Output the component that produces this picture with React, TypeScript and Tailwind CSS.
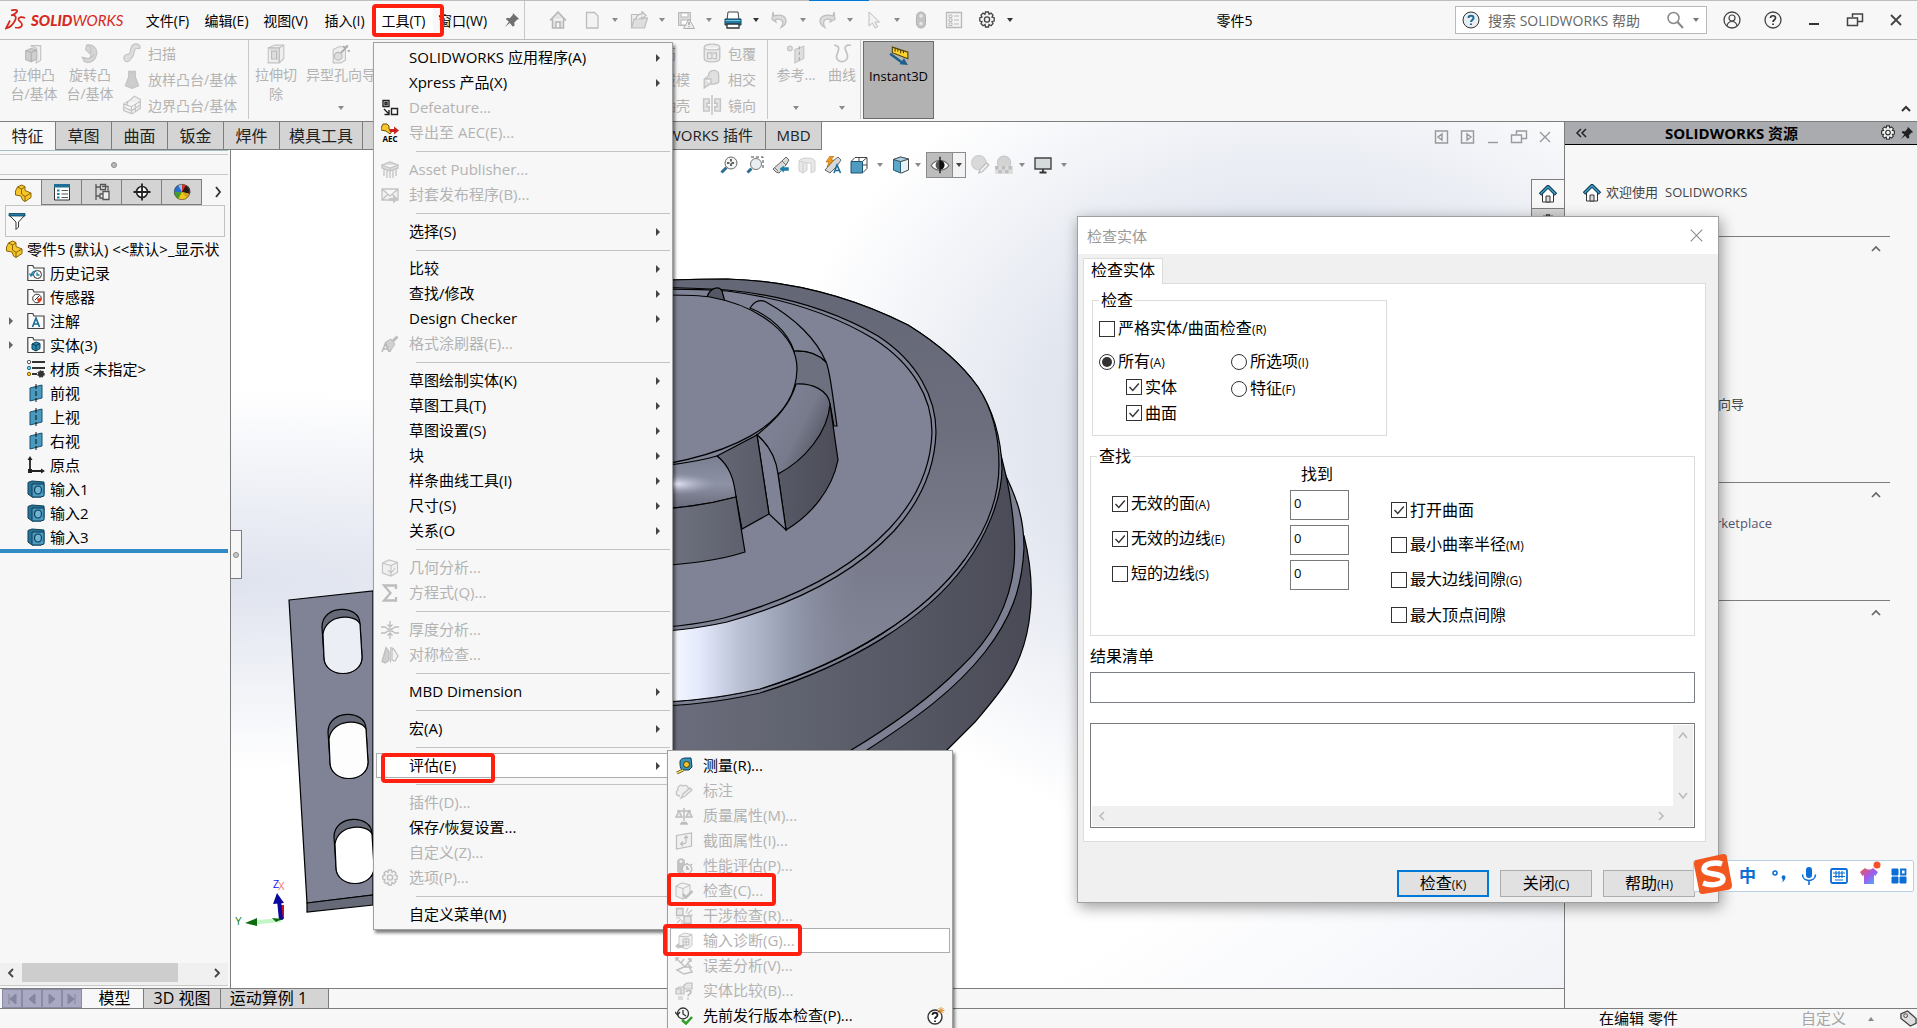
import React from "react";

type P = { children?: React.ReactNode; s?: number; c?: string };
const Ic = ({ children, s = 18, c = "" }: P) => (
  <svg width={s} height={s} viewBox="0 0 18 18" fill="none" className={"shrink-0 " + c} aria-hidden="true">
    {children}
  </svg>
);
const G = "#c3c3c3";
const F = "#e4e4e4";

const Down = ({ c = "text-[#8a8a8a]" }: { c?: string }) => (
  <svg width="8" height="5" viewBox="0 0 8 5" className={"shrink-0 " + c} aria-hidden="true">
    <path d="M1 0h6L4 4z" fill="currentColor" />
  </svg>
);

const icons = {
  home: <path d="M1 9.500 9 1l8 8.500M3.500 8v9h11V8M7 17v-6h4v6" stroke="#b5b5b5" strokeWidth="1.500" fill={F} />,
  homeBlue: (
    <>
      <path d="M3.500 8.500 9 3l5.500 5.500V17h-11z" fill="#fff" stroke="#333" />
      <path d="M7 17v-6h4v6z" fill="#ddd" stroke="#333" />
      <path d="M1 9.500 9 1.500l8 8" stroke="#0d3d57" strokeWidth="3.500" />
      <path d="M1.500 9 9 1.700l7.500 7.300" stroke="#3fa0c4" strokeWidth="1.500" />
    </>
  ),
  doc: <path d="M3.500 1.500h8l3.500 3.500v12H3.500z" fill="#f3f3f3" stroke="#bdbdbd" strokeWidth="1.300" />,
  open: (
    <>
      <path d="M1.500 3.500h6l1.500 2h5v11H1.500z" fill="#eee" stroke="#bdbdbd" strokeWidth="1.200" />
      <path d="m4 8 13.500-1-3 10H1.500z" fill="#dedede" stroke="#bdbdbd" strokeWidth="1.200" />
      <path d="M6 9c0-5 3-6 6-6V.500l4 4-4 3.500V5.500" stroke="#bdbdbd" strokeWidth="1.300" fill="#eee" />
    </>
  ),
  save: (
    <>
      <path d="M1.500 1.500h12v13h-12z" fill="#ddd" stroke="#b8b8b8" />
      <path d="M4 2h7v4H4zM4 9h7v5H4z" fill="#fff" stroke="#b8b8b8" />
      <path d="m12 8 5.500 9.500h-11z" fill="#eee" stroke="#b0b0b0" />
      <path d="M12 11v3m0 1.200v1" stroke="#999" strokeWidth="1.300" />
    </>
  ),
  print: (
    <>
      <path d="M4 1h10l1 8H3z" fill="#fff" stroke="#444" />
      <path d="M1 8h16v6H1z" fill="#1e7ea6" stroke="#0c3e56" />
      <path d="M1.500 9.500h15" stroke="#7ec4df" />
      <path d="M3 13h12v4H3z" fill="#fff" stroke="#333" strokeWidth="1.300" />
    </>
  ),
  undo: (
    <>
      <path d="M3 5c7-2 12 0 12 5 0 3-2 5-5 6.500 2-3 3-7-1-8-2-.6-4 0-5 .5l1 2-4-2.500L2 1z" fill="#dcdcdc" stroke="#bdbdbd" strokeWidth="1.200" />
    </>
  ),
  redo: (
    <>
      <path d="M15 5C8 3 2 5 2 10c0 3 2 5 5 6.500-2-3-2-7 1-8 2-.6 4 0 5 .5l-1 2 5-2.500L16 1z" fill="#dcdcdc" stroke="#bdbdbd" strokeWidth="1.200" />
    </>
  ),
  cursor: <path d="M4 1v14l3.500-3 2.500 5 2.500-1.200L10 11h4.500z" fill="#f3f3f3" stroke="#bdbdbd" />,
  light: (
    <>
      <rect x="4.500" y="1" width="9" height="16" rx="4.500" fill="#c4c4c4" stroke="#b0b0b0" />
      <circle cx="9" cy="5" r="1.700" fill="#e8e8e8" />
      <circle cx="9" cy="12.500" r="1.700" fill="#e8e8e8" />
    </>
  ),
  list: (
    <>
      <path d="M1.500 1.500h15v15h-15z" fill="#f4f4f4" stroke="#b9b9b9" strokeWidth="1.300" />
      <path d="M4 4h3v2.500H4zM4 8h3v2.500H4zM4 12h3v2.500H4zM9 5h5M9 9h5M9 13h5" stroke="#b9b9b9" />
    </>
  ),
  gear: (
    <>
      <path
        d="M7.500 1h3l.5 2.200 2-1.100 2 2-1 2 2.200.6v3.400l-2.200.5 1 2-2 2.100-2-1.100-.5 2.400h-3L7 13.600l-2 1.100-2-2.100 1-2-2.200-.5V6.700L4 6.100l-1-2 2-2 2 1.100z"
        stroke="currentColor"
        strokeWidth="1.300"
        fill="#f2f2f2"
      />
      <circle cx="9" cy="8.500" r="2.600" stroke="currentColor" strokeWidth="1.300" />
    </>
  ),
  pin: <path d="m10 1 7 7-2 .5-3.500 3.500.5 3-2 1.500-3.500-4L1 17l4.500-6L2 8l1.500-1.500 3 .5L10 3z" fill="currentColor" />,
  boss: (
    <>
      <path d="M6 1.500h9v13l-4 2.500V4z" fill="#eee" stroke={G} />
      <path d="m1.500 6 5-2 5 1.500v8l-5 2.500-5-2z" fill="#cfcfcf" stroke="#b8b8b8" />
      <path d="m1.500 6 5 1.500 5-2M6.500 7.500V16" stroke="#b0b0b0" />
    </>
  ),
  revolve: (
    <>
      <path d="M6 1c6-1 10 3 9 8-1 6-6 9-11 7l-2-4 5 1c3 0 4-4 1-5L5 5z" fill="#d5d5d5" stroke={G} />
      <path d="M6 1c4 1 5 4 3 7M2 12c4 2 9 1 11-3" stroke={G} />
    </>
  ),
  sweep: <path d="M2 15c-1-3 1-5 4-5 3-1 0-7 5-9 4-1 6 2 5 4h-3c-3 0-1 6-5 9-1 3-5 4-6 1z" fill="#dedede" stroke={G} />,
  loft: <path d="M6 2h6v5l3 8-6 2.500L3 15l3-8zM6 2l3 1.500L12 2" fill="#cdcdcd" stroke={G} />,
  boundary: <path d="M1.500 8 8 4l3-3 5.500 3v8L9 17l-7.500-3zM1.500 8l7 2.500 8-5M8.500 10.500V17M5 9V5.500M12 8v7M1.500 11l7 3 8-5" fill="#efefef" stroke={G} />,
  cut: (
    <>
      <path d="M2 3.500 8 1h8v12l-4 4H2z" fill="#eee" stroke={G} />
      <path d="M2 3.500h10V17M12 3.500 16 1M5 6.500h4.500v7H5z" fill="#ddd" stroke="#bbb" />
    </>
  ),
  hole: (
    <>
      <path d="M2 5 7 2.500h6v12L9 17H2z" fill="#eee" stroke={G} />
      <circle cx="6.500" cy="11" r="3.500" fill="#ddd" stroke="#b8b8b8" />
      <path d="m9 8 6-6M11 2l1.500 1.500M15 6l2 .5M14 1l1 2" stroke="#aaa" strokeWidth="1.600" />
    </>
  ),
  wrap: <path d="M2 4c0-4 14-4 14 0v10c0 4-14 4-14 0zM2 4c0 3 14 3 14 0M5 9h4v5H5zM10 9h3v5h-3" fill="#eaeaea" stroke={G} strokeWidth="1.200" />,
  intersect: <path d="M6 5c0-5 9-5 9 0v7c-2 2-6 2-7 1l-6 4V9l4-3zM8 13V9L2 9" fill="#e0e0e0" stroke={G} strokeWidth="1.200" />,
  mirror: <path d="M9 0v18M1.500 3.500v11h5v-4h-2v-3h2v-4zM16.500 3.500v11h-5v-4h2v-3h-2v-4z" fill="#e6e6e6" stroke={G} strokeWidth="1.300" />,
  refgeo: (
    <>
      <circle cx="3.500" cy="4" r="2.200" fill="#ddd" stroke={G} />
      <path d="m8 5 8-3v11l-8 4z" fill="#dedede" stroke={G} />
      <path d="M12 2v15" stroke="#aaa" strokeDasharray="3 2" />
    </>
  ),
  curve: <path d="M2 1c7 1 3 6 2 10 0 7 10 6 10 0 0-4-5-8 0-10h3" stroke={G} strokeWidth="1.600" />,
  instant: (
    <>
      <path d="m3 1 14 4.500v6L3 6z" fill="#ffd42e" stroke="#4f4000" />
      <path d="M5.500 2v3M8 2.700v2.200M10.500 3.500v3M13 4.300v2.200" stroke="#4f4000" />
      <path d="m1 7 11 8" stroke="#1f5f8c" strokeWidth="2.200" />
      <path d="m9.500 16.500 7.500.5-3.500-6z" fill="#1f5f8c" />
    </>
  ),
  part: (
    <>
      <path d="m1.500 7 2-4 4-2 3.500 1.500v4L17 9v4.500l-6 4L8.500 16 7 12 1.500 11z" fill="#f6c62a" stroke="#8a6508" />
      <path d="m3.500 3 4 2L11 3M7.500 5v5l3.500 2.500L17 9M11 12.500v5" stroke="#8a6508" />
    </>
  ),
  props: (
    <>
      <path d="M1.500 2h15v15h-15z" fill="#fff" stroke="#333" />
      <path d="M1 1h16v3.500H1z" fill="#1d6f95" />
      <path d="M4 7.500h2.500M4 11h2.500M4 14.500h2.500" stroke="#1d7fa8" strokeWidth="2" />
      <path d="M8.500 7.500H15M8.500 11H15M8.500 14.500H15" stroke="#555" />
    </>
  ),
  config: <path d="M3 1v16M3 4h4M3 13h4M7.500 1.500h5v5h-5zM10 8.500h6v8h-6zM7 11h3v4H7zM9 3.500h6v4" stroke="#555" strokeWidth="1.300" fill="#eee" />,
  target: (
    <>
      <circle cx="9" cy="9" r="5.500" stroke="#222" strokeWidth="1.600" fill="#fff" />
      <path d="M9 .5v17M.5 9h17" stroke="#222" strokeWidth="1.800" />
    </>
  ),
  ball: (
    <>
      <circle cx="9" cy="9" r="8" fill="#f0c419" />
      <path d="M9 9C8 6 7 3 5 2a8 8 0 0 0-4 7c0 1 0 2 1 3z" fill="#2a6fd0" />
      <path d="M9 9 8 1a8 8 0 0 0-3 1z" fill="#8cc3f2" />
      <path d="M9 9 2 12A8 8 0 0 1 1 9z" fill="#45a02b" />
      <path d="M9 9 9 1a8 8 0 0 1 7 5z" fill="#d9362b" />
      <path d="M9 9 13 2a8 8 0 0 1 4 9z" fill="#2b1a1a" />
      <path d="m9 9 5 6.200a8 8 0 0 0 3-4.200z" fill="#d9a520" />
      <path d="M9 9 2 12a8 8 0 0 0 3 4z" fill="#3f9a2b" />
      <circle cx="9" cy="9" r="7.700" stroke="#555" strokeWidth=".7" />
    </>
  ),
  funnel: (
    <>
      <path d="M1 3h16l-6.500 7v5L8 17.500V10z" fill="#fff" stroke="#333" />
      <path d="M1 1.500h16V4H1z" fill="#1e7ea6" stroke="#0c3e56" strokeWidth=".8" />
    </>
  ),
  zoomfit: (
    <>
      <path d="m1.500 16.500 5-5" stroke="#2b6f96" strokeWidth="3" />
      <circle cx="11" cy="7" r="6" fill="#f4f4f4" stroke="#666" />
      <path d="M11 3v8M7 7h8" stroke="#333" strokeDasharray="2.500 2" strokeWidth="1.500" />
    </>
  ),
  zoomarea: (
    <>
      <path d="M5 1h12v12" stroke="#444" strokeDasharray="3 2" />
      <path d="m1.500 16.500 4-4" stroke="#2b6f96" strokeWidth="3" />
      <circle cx="10" cy="8" r="5.500" fill="#e9eef2" stroke="#777" />
    </>
  ),
  prev: (
    <>
      <path d="m1 13 9-8 4-4 3 3-3 5-7 8-3-1z" fill="#d8d8d8" stroke="#666" />
      <path d="m3 12 3 3M10 5l4 4" stroke="#777" />
      <path d="m7 13 5-4v2h5v4h-5v2z" fill="#1d7fa8" stroke="#fff" strokeWidth=".5" />
    </>
  ),
  section: <path d="M1 5c2-4 14-4 16 0v10l-4 2V7H9v7l-4 3-4-2zM1 5l8 2M5 7v10" fill="#e8e8e8" stroke="#cfcfcf" />,
  dyn: (
    <>
      <path d="m1 14 8-9 5-4 3 3-4 6-7 7z" fill="#d8d8d8" stroke="#666" />
      <path d="m6 0-4 6h3l-2 5 7-7H7l3-4z" fill="#f39a1d" stroke="#a85f00" strokeWidth=".6" />
      <path d="m10 17 3-8 3.500 8M11 14.500h4.500" stroke="#1f6f9c" strokeWidth="1.600" />
    </>
  ),
  orient: (
    <>
      <path d="M5 1.500h12v11l-4 4M13 5l4-3.500M5 1.500 1.500 5M9 1v4M13 9h4" stroke="#444" fill="#fff" />
      <path d="M1 5.500h11.500V17H1z" fill="#4f9cc0" stroke="#1c536e" />
    </>
  ),
  style: (
    <>
      <path d="m1.500 3.500 7-2.500 8 2v11l-7 3-8-3z" fill="#e4f1f7" stroke="#444" />
      <path d="m1.500 3.500 7 2V17l-7-3z" fill="#5aa9cb" stroke="#2b5f78" />
      <path d="m8.500 5.500 8-2.500" stroke="#444" />
      <path d="m1.500 3.500 7-2.500 8 2-8 2.500z" fill="#a9d3e6" stroke="#444" strokeWidth=".8" />
    </>
  ),
  eye: (
    <>
      <path d="M1 9.500c4-6 12-6 16 0-4 5.500-12 5.500-16 0z" fill="#fff" stroke="#666" />
      <circle cx="9" cy="9" r="4" fill="#555" />
      <path d="M9 5a4 4 0 0 1 0 8z" fill="#111" />
      <path d="M9 1.500v15" stroke="#111" strokeWidth="1.200" />
    </>
  ),
  appear: (
    <>
      <circle cx="8" cy="7" r="6.500" fill="#d9d9d9" stroke="#ccc" />
      <path d="m8 16 1-3 6-6 2 2-6 6z" fill="#f1f1f1" stroke="#bbb" />
    </>
  ),
  scene: (
    <>
      <circle cx="9" cy="7" r="6" fill="#d4d4d4" stroke="#c8c8c8" />
      <path d="M1 10h16v7H1z" fill="#dcdcdc" />
      <path d="M1 10h3v3H1zM7 10h3v3H7zM13 10h3v3h-3zM4 13.500h3v3H4zM10 13.500h3v3h-3z" fill="#bdbdbd" />
    </>
  ),
  monitor: (
    <>
      <path d="M1 2h16v11H1z" fill="#d5dadb" stroke="#444" strokeWidth="1.400" />
      <path d="M9 13v3M5.500 16.500h7" stroke="#333" strokeWidth="1.800" />
    </>
  ),
  defeature: <path d="M2 1.500h6v6H2zM4 3.500h2v2H4zM10.500 9.500h6v6h-6zM3 10l5 5M8 11v4.500H3.500" stroke="#222" strokeWidth="1.400" />,
  asset: <path d="m1 4 8-3 8 3-8 3zM1 4v3l8 3 8-3V4M3 8v7M6 9v8M12 9v8M15 8v7M9 7v10" fill="#ddd" stroke={G} strokeWidth="1.300" />,
  envelope: (
    <>
      <path d="M1 3h16v11H1zM1 3l8 7 8-7M1 14l6-6M17 14l-6-6" fill="#f0f0f0" stroke={G} strokeWidth="1.300" />
      <path d="M8 12h4v-2.500l5 4-5 4V15H8z" fill="#c5c5c5" />
    </>
  ),
  brush: (
    <>
      <path d="m16.500 1.500-5 5" stroke="#bdbdbd" strokeWidth="3" />
      <path d="m6 6 4-2 4 5-2 3-3 5-5-7z" stroke="#bdbdbd" fill="#d0d0d0" />
      <path d="m1 17 3.500-9L8 17M2 14h5" stroke="#b9b9b9" strokeWidth="1.500" />
    </>
  ),
  geoan: <path d="M1.500 4 8 1l8.500 2.500v10L10 17l-8.500-3zM1.500 4 10 6.500l6.500-3M10 6.500V17M7 11l3 3 4-5" fill="#f0f0f0" stroke="#c5c5c5" strokeWidth="1.200" />,
  sigma: <path d="M15 5V1.500H3L9.500 9 3 16.500h12V13" stroke="#bdbdbd" strokeWidth="2.300" />,
  thick: <path d="M9 0v6M6.500 3.500 9 6l2.500-2.500M9 18v-6M6.500 14.500 9 12l2.500 2.500M0 6h4l3 2h4l3-2h4M0 12h4l3-2h4l3 2h4" stroke="#bdbdbd" strokeWidth="1.300" />,
  symm: (
    <>
      <path d="m1 15.500 4-14 3 4v9l-4 2.500z" fill="#cfcfcf" stroke="#bdbdbd" strokeWidth="1.200" />
      <path d="m11 2 2 1.500 4 6.500-3 5-3-1z" fill="#f3f3f3" stroke="#c0c0c0" strokeWidth="1.300" />
      <path d="M9.500 1v16" stroke="#c8c8c8" />
    </>
  ),
  measure: (
    <>
      <path d="M5 5c0-3 3-4 6-4h5l1 9-3 3H7c-2-2-2-5-2-8z" fill="#3a94bb" stroke="#0d3d57" />
      <circle cx="11.500" cy="7.500" r="3" fill="#f4c430" stroke="#4a3a00" />
      <path d="m8 13-6 3" stroke="#4a3a00" strokeWidth="3" />
      <path d="m8 13-6 3" stroke="#f4d75c" strokeWidth="1.400" />
    </>
  ),
  note: <path d="M5 14c-4 0-5-4-2-6-1-4 3-6 5-4 3-2 6 1 5 3M6 16l2-4 7-6 2 2-7 6z" stroke={G} strokeWidth="1.300" fill="#efefef" />,
  scale: <path d="M9 1v13M2 4h14M4 4 1 10h6zM14 4l-3 6h6zM6 15.500h6M5 17h8" stroke="#bebebe" strokeWidth="1.500" fill="#e8e8e8" />,
  sect: <path d="M1.500 3.500 16.500 1v13l-15 3zM11 5v5c0 2-3 2-5 2M8 9.500 5.500 12 8 14M9 6.500 11 4l2 2" stroke="#bdbdbd" strokeWidth="1.200" fill="#f1f1f1" />,
  perf: (
    <>
      <path d="M2 5c0-5 8-5 8 0v4l-3 7c-3 1-5 0-5-3z" fill="#c2c2c2" />
      <circle cx="6" cy="4.500" r="1.500" fill="#eee" />
      <circle cx="12" cy="12" r="4.800" fill="#f1f1f1" stroke="#bbb" strokeWidth="1.300" />
      <path d="M12 9v3h2M12 6v1M16 7l1 1" stroke="#aaa" strokeWidth="1.300" />
    </>
  ),
  check: (
    <>
      <path d="M1 4 7 1l8 2v9l-7 5-7-3zM1 4l7 2.500L15 3M8 6.500V16" fill="#f2f2f2" stroke="#c8c8c8" strokeWidth="1.200" />
      <path d="m8 12 3 3.500L17.500 9" stroke="#bdbdbd" strokeWidth="2.500" />
    </>
  ),
  interf: (
    <>
      <path d="M1.500 1.500h6.500v7H1.500zM9 9h7v7.500H9z" fill="#e6e6e6" stroke="#bdbdbd" strokeWidth="1.300" />
      <path d="M11 6l2-5M12.500 7 17 3M13 8h5M1 11h4M2 16l4-4M7 17v-4" stroke="#c6c6c6" strokeWidth="1.200" />
    </>
  ),
  importd: (
    <>
      <path d="m4 4 5-3 8 1.500v11L12 17l-8-2z" fill="#f2f2f2" stroke="#c8c8c8" />
      <path d="M8 7h6v6H8zM11 7v6M8 10h6M4 4l8 1 5-2.500" stroke="#bdbdbd" />
      <path d="m0 14 4-3v2h5v2.500H4V17z" fill="#c2c2c2" />
    </>
  ),
  dev: <path d="m1 1 5 5M1 4V1h3M9 2l-3 4 4 4 6-8M13 2h3v3M9 10l-7 3 7 4 8-2-3-5zM13 7l4 4" stroke="#bfbfbf" strokeWidth="1.400" />,
  compare: (
    <>
      <path d="m1 7 3-2h5v7H1zM1 7h5v5M9 3l3-2h5v6H9zM3 15h5M3 17h5" fill="#e5e5e5" stroke="#bfbfbf" strokeWidth="1.200" />
      <path d="M11 10c1-2 5-2 5 0s-3 2-3 4.500M13 16v1.500" stroke="#bbb" strokeWidth="1.600" />
    </>
  ),
  prevcheck: (
    <>
      <circle cx="8" cy="6.500" r="5.500" stroke="#333" strokeWidth="1.300" />
      <path d="M8 3v4l3 2M0 5l2.500 3L5 5" stroke="#333" strokeWidth="1.300" />
      <path d="m7 13 4 3.500L17 10" stroke="#2f9d28" strokeWidth="2.500" />
    </>
  ),
  qnew: (
    <>
      <circle cx="8" cy="10" r="7" stroke="#333" strokeWidth="1.400" fill="#fff" />
      <path d="M5.500 8c0-3 5-3 5 0 0 2-2.500 2-2.500 4M8 13.500V15" stroke="#222" strokeWidth="1.800" />
      <path d="M14 0v7M10.500 3.500h7M11.500 1l5 5M16.500 1l-5 5" stroke="#e0902a" />
    </>
  ),
};
type IN = keyof typeof icons;
const I = ({ n, s, c }: { n: IN; s?: number; c?: string }) => <Ic s={s} c={c}>{icons[n]}</Ic>;

const Folder = ({ children }: { children: React.ReactNode }) => (
  <Ic>
    <path d="M.800 4V1.500h5L7 4h10v12.500H.800z" fill="#fafafa" stroke="#444" strokeWidth="1.200" />
    {children}
  </Ic>
);
const Plane = (
  <Ic>
    <path d="m3 4 12-3v13L3 17z" fill="#4a9abf" stroke="#16506d" />
    <path d="M9 0v18" stroke="#111" strokeDasharray="5 2" />
  </Ic>
);
const Cube = (
  <Ic>
    <path d="M1 2.500 5 1l12 1v12l-3 3H5l-4-3z" fill="#2a7398" stroke="#0d3d57" />
    <path d="M5 4h12v12l-3 1H5z" fill="#4a9bc0" stroke="#0d3d57" />
    <ellipse cx="11" cy="10" rx="3.500" ry="4" fill="#6fb4d1" stroke="#0d3d57" strokeWidth="1.200" />
  </Ic>
);

const tree: { t: string; i: React.ReactNode; x?: boolean }[] = [
  { t: "历史记录", i: <Folder><circle cx="10.500" cy="10.500" r="4" stroke="#333" /><path d="M4 11a6 6 0 0 1 5-4M2.500 9.500 4 12l2.500-2M10 8.500v2.500h2.500" stroke="#1d7fa8" strokeWidth="1.300" /></Folder> },
  { t: "传感器", i: <Folder><circle cx="10" cy="10.500" r="4.300" stroke="#333" fill="#fff" /><path d="M10 10.500 14 10a4 4 0 0 1-3 4.500z" fill="#e03a1c" /><path d="m8 12 4-4" stroke="#333" /></Folder> },
  { t: "注解", x: true, i: <Folder><path d="m5.500 15 3.500-9 3.500 9M7 12h4.500" stroke="#1d6f95" strokeWidth="1.700" /></Folder> },
  { t: "实体(3)", x: true, i: <Folder><path d="m5 8 4-2 4 1.500v5L9 15l-4-2z" fill="#2b88b0" stroke="#0d3d57" /><path d="m5 8 4 1.500L13 7.500M9 9.500V15" stroke="#0d3d57" /></Folder> },
  { t: "材质 <未指定>", i: <Ic><path d="M5 2h13M5 8h13M5 14h5" stroke="#333" strokeWidth="1.800" /><circle cx="2" cy="2" r="1.700" fill="#fff" stroke="#555" /><circle cx="2" cy="8" r="1.700" fill="#7cc7e6" stroke="#1d6f95" /><circle cx="2" cy="14" r="1.700" fill="#f3c623" stroke="#8a6508" /><circle cx="14" cy="14" r="3" fill="#333" stroke="#333" strokeWidth="1.500" strokeDasharray="1.500 1" /></Ic> },
  { t: "前视", i: Plane },
  { t: "上视", i: Plane },
  { t: "右视", i: Plane },
  { t: "原点", i: <Ic><path d="M3 2v13h13" stroke="#222" strokeWidth="1.800" /><path d="m3 0 2.500 4h-5zM18 15l-4-2.500v5zM1 13h4v4H1z" fill="#222" /></Ic> },
  { t: "输入1", i: Cube },
  { t: "输入2", i: Cube },
  { t: "输入3", i: Cube },
];

const Aec = (
  <Ic>
    <path d="m0 5 2-4h4l2 2v3l3 2-2 3-4-3-5-1z" fill="#f6c62a" stroke="#6d5006" />
    <path d="M8 6h5V3.500l5 4-5 4V9H9z" fill="#cc2222" />
  </Ic>
);

type MI = { t?: string; d?: boolean; sub?: boolean; i?: React.ReactNode; hot?: boolean } | null;
const menu: MI[] = [
  { t: "SOLIDWORKS 应用程序(A)", sub: true },
  { t: "Xpress 产品(X)", sub: true },
  { t: "Defeature...", d: true, i: <I n="defeature" /> },
  {
    t: "导出至 AEC(E)...",
    d: true,
    i: (
      <span className="flex flex-col items-center">
        <span className="h-3 overflow-hidden">{Aec}</span>
        <span className="text-[8px] leading-2 font-bold text-black">AEC</span>
      </span>
    ),
  },
  null,
  { t: "Asset Publisher...", d: true, i: <I n="asset" /> },
  { t: "封套发布程序(B)...", d: true, i: <I n="envelope" /> },
  null,
  { t: "选择(S)", sub: true },
  null,
  { t: "比较", sub: true },
  { t: "查找/修改", sub: true },
  { t: "Design Checker", sub: true },
  { t: "格式涂刷器(E)...", d: true, i: <I n="brush" /> },
  null,
  { t: "草图绘制实体(K)", sub: true },
  { t: "草图工具(T)", sub: true },
  { t: "草图设置(S)", sub: true },
  { t: "块", sub: true },
  { t: "样条曲线工具(I)", sub: true },
  { t: "尺寸(S)", sub: true },
  { t: "关系(O", sub: true },
  null,
  { t: "几何分析...", d: true, i: <I n="geoan" /> },
  { t: "方程式(Q)...", d: true, i: <I n="sigma" /> },
  null,
  { t: "厚度分析...", d: true, i: <I n="thick" /> },
  { t: "对称检查...", d: true, i: <I n="symm" /> },
  null,
  { t: "MBD Dimension", sub: true },
  null,
  { t: "宏(A)", sub: true },
  null,
  { t: "评估(E)", sub: true, hot: true },
  null,
  { t: "插件(D)...", d: true },
  { t: "保存/恢复设置..." },
  { t: "自定义(Z)...", d: true },
  { t: "选项(P)...", d: true, i: <I n="gear" c="text-[#bdbdbd]" /> },
  null,
  { t: "自定义菜单(M)" },
];
const evalMenu: MI[] = [
  { t: "测量(R)...", i: <I n="measure" /> },
  { t: "标注", d: true, i: <I n="note" /> },
  { t: "质量属性(M)...", d: true, i: <I n="scale" /> },
  { t: "截面属性(I)...", d: true, i: <I n="sect" /> },
  { t: "性能评估(P)...", d: true, i: <I n="perf" /> },
  { t: "检查(C)...", d: true, i: <I n="check" /> },
  { t: "干涉检查(R)...", d: true, i: <I n="interf" /> },
  { t: "输入诊断(G)...", d: true, i: <I n="importd" />, hot: true },
  { t: "误差分析(V)...", d: true, i: <I n="dev" /> },
  { t: "实体比较(B)...", d: true, i: <I n="compare" /> },
  { t: "先前发行版本检查(P)...", i: <I n="prevcheck" /> },
];

const Menu = ({ items, help }: { items: MI[]; help?: boolean }) => (
  <ul className="flex flex-col px-[2px] py-[2px] text-[15px]">
    {items.map((m, k) =>
      m === null ? (
        <li key={k} className="flex h-3 items-center pl-10" role="separator">
          <span className="h-px w-full bg-[#c3c3c3]" />
        </li>
      ) : (
        <li key={k}>
          <button
            disabled={m.d}
            className={
              "flex h-[25px] w-full items-center border text-left whitespace-nowrap " +
              (m.hot ? "border-[#adadad] bg-white " : "border-transparent ") +
              (m.d ? "text-[#b3b3b3]" : "text-black")
            }
          >
            <span className="flex w-8 shrink-0 pl-1">{m.i}</span>
            <span className="flex-1">{m.t}</span>
            {m.sub && (
              <svg width="5" height="8" viewBox="0 0 5 8" className="mr-2" aria-hidden="true">
                <path d="m0 0 4 4-4 4z" fill="#444" />
              </svg>
            )}
            {help && k === items.length - 1 && <span className="mr-1"><I n="qnew" /></span>}
          </button>
        </li>
      )
    )}
  </ul>
);

const Tick = ({ t, a, on, c = "" }: { t: string; a?: string; on?: boolean; c?: string }) => (
  <label className={"flex h-[21px] items-center gap-[3px] whitespace-nowrap " + c}>
    <span className="relative flex size-4 shrink-0">
      <input type="checkbox" defaultChecked={on} className="peer size-4 appearance-none border border-[#333] bg-white" />
      <svg viewBox="0 0 16 16" className="pointer-events-none absolute inset-0 hidden peer-checked:block" aria-hidden="true">
        <path d="m3.500 8 3.300 3.500 6-7" stroke="#333" strokeWidth="1.400" fill="none" />
      </svg>
    </span>
    <span>{t}{a && <span className="text-[12px]">{a}</span>}</span>
  </label>
);
const Radio = ({ t, a, on, c = "" }: { t: string; a: string; on?: boolean; c?: string }) => (
  <label className={"flex h-[21px] items-center gap-[3px] whitespace-nowrap " + c}>
    <span className="relative flex size-4 shrink-0">
      <input type="radio" name="scope" defaultChecked={on} className="peer size-4 appearance-none rounded-full border border-[#333] bg-white" />
      <span className="pointer-events-none absolute inset-[3px] hidden rounded-full bg-[#333] peer-checked:block" />
    </span>
    <span>{t}<span className="text-[12px]">{a}</span></span>
  </label>
);

const Slot = ({ x, y, f }: { x: number; y: number; f: string }) => (
  <g transform={`translate(${x} ${y})`}>
    <path d="M322 627C322 604 360 604 360 624L362 657C362 679 324 679 324 657Z" fill="#666977" stroke="#000" />
    <path d="M323 634C326 613 356 614 360 624L362 657C362 679 324 679 324 657Z" fill={f} stroke="#000" />
  </g>
);

const RIM = "M600 282C640 281 690 279 727 279C800 281 860 301 908 325C945 348 966 370 978 387C993 410 999 436 999 465C999 500 985 532 965 559C925 614 850 661 760 689C720 698 690 702 600 705Z";

const Model = () => (
  <svg className="absolute top-0 left-0" width="1334" height="866" viewBox="231 122 1334 866" fill="none" stroke="#000" strokeWidth="1.200" aria-hidden="true">
    <defs>
      <linearGradient id="shine" x1="673" x2="860" y1="0" y2="0" gradientUnits="userSpaceOnUse">
        <stop offset="0" stopColor="#f6f8ff" />
        <stop offset=".14" stopColor="#e4e9fc" />
        <stop offset=".35" stopColor="#bcc2d6" />
        <stop offset=".65" stopColor="#9298ac" />
        <stop offset="1" stopColor="#7f8395" stopOpacity="0" />
      </linearGradient>
      <linearGradient id="rim" x1="0" x2="0" y1="280" y2="640" gradientUnits="userSpaceOnUse">
        <stop offset="0" stopColor="#646775" />
        <stop offset=".4" stopColor="#6c6e7d" />
        <stop offset=".7" stopColor="#777989" />
        <stop offset="1" stopColor="#808394" />
      </linearGradient>
      <linearGradient id="wall" x1="673" x2="1020" y1="0" y2="0" gradientUnits="userSpaceOnUse">
        <stop offset="0" stopColor="#6b6d7c" />
        <stop offset=".55" stopColor="#5a5d69" />
        <stop offset="1" stopColor="#4a4b57" />
      </linearGradient>
      <linearGradient id="torus" x1="0" x2="0" y1="460" y2="508" gradientUnits="userSpaceOnUse">
        <stop offset="0" stopColor="#7d8194" />
        <stop offset=".5" stopColor="#8e92a5" />
        <stop offset="1" stopColor="#686b7a" />
      </linearGradient>
      <radialGradient id="glint" cx="673" cy="484" r="44" gradientUnits="userSpaceOnUse" gradientTransform="translate(0 363) scale(1 .25)">
        <stop offset="0" stopColor="#eef0ff" />
        <stop offset="1" stopColor="#a0a4b8" stopOpacity="0" />
      </radialGradient>
      <linearGradient id="seg" x1="770" x2="830" y1="400" y2="430" gradientUnits="userSpaceOnUse">
        <stop offset="0" stopColor="#808497" />
        <stop offset=".6" stopColor="#777a8b" />
        <stop offset="1" stopColor="#565864" />
      </linearGradient>
      <linearGradient id="hubwall" x1="673" x2="840" y1="0" y2="0" gradientUnits="userSpaceOnUse">
        <stop offset="0" stopColor="#6d707e" />
        <stop offset="1" stopColor="#4b4c58" />
      </linearGradient>
      <clipPath id="lower"><rect x="600" y="560" width="400" height="200" /></clipPath>
    </defs>
    <path d="M600 500H1003L1024 536C1030 560 1034 590 1029 622C1022 668 1002 690 975 722L945 752L930 770H600Z" fill="url(#wall)" />
    <path d="M1003 470C1018 500 1024 520 1024 548C1022 590 1010 620 985 652C955 690 918 717 864 752H600V480Z" fill="#7c8092" />
    <path d="M1001 455L1007 480C1014 515 1016 540 1014 565C1010 605 990 640 960 668C930 698 895 724 848 752H600V460Z" fill="url(#wall)" />
    <path d="M600 284C640 281 690 279 727 279C800 281 860 301 908 325C945 348 966 370 978 387C993 410 1001 436 1002 468C1002 500 985 538 965 565C925 620 850 665 760 693C720 702 690 706 600 709Z" fill="#7c8092" />
    <path d={RIM} fill="url(#rim)" />
    <path d={RIM} fill="url(#shine)" stroke="none" clipPath="url(#lower)" />
    <path d="M600 705C690 702 720 698 760 689C850 661 925 614 965 559" />
    <path d="M600 287C640 287 690 287 727 290C790 296 840 314 878 336C918 362 936 398 936 432C935 470 920 502 894 531C855 572 800 602 727 622C700 628 670 632 600 636Z" fill="#7f8395" />
    <path d="M600 291C640 289 690 288 727 291C790 299 836 316 874 339C913 364 932 398 932 432C931 468 916 500 890 528C852 568 798 598 724 618C700 624 670 628 600 632Z" fill="#7f8395" />
    <path d="M707 297C710 288 719 285 722 291L725 302Z" fill="#555864" />
    <path d="M826 362C830 370 831 385 837 426H834L830 404L794 385V351C810 350 820 355 826 362Z" fill="#6d707f" />
    <path d="M750 308C755 300 760 299 766 302C795 318 817 340 826 362C818 354 808 350 794 351C788 332 770 316 750 308Z" fill="url(#seg)" />
    <path d="M830 404L838 460C832 490 811 515 786 530L778 474C800 460 822 440 830 404Z" fill="url(#hubwall)" />
    <path d="M796 384C812 383 828 390 830 404C828 432 805 460 778 474C774 455 768 444 757 435C775 420 790 405 796 384Z" fill="url(#seg)" />
    <path d="M757 435C770 446 776 458 778 474L786 530L769 514Z" fill="#7f8395" />
    <path d="M717 456L757 435L769 514L742 529L736 497C732 478 728 465 717 456Z" fill="url(#hubwall)" />
    <path d="M600 470C650 468 690 464 717 456C730 466 734 480 736 497C710 504 690 508 600 514Z" fill="url(#torus)" />
    <ellipse cx="673" cy="484" rx="44" ry="11" fill="url(#glint)" stroke="none" />
    <path d="M600 514C690 508 710 504 736 497L745 552C720 560 700 564 600 570Z" fill="url(#hubwall)" />
    <path d="M600 296C650 295 690 294 710 297C760 306 797 335 797 369C796 420 740 462 600 472Z" fill="#7f8395" />
    <path d="M289 600L373 591V895L307 903Z" fill="#7f8395" />
    <path d="M307 903L373 895V905L307 912Z" fill="#666977" />
    <Slot x={0} y={0} f="#eceef5" />
    <Slot x={6} y={105} f="#fdfdfe" />
    <Slot x={12} y={210} f="#fff" />
    <g strokeWidth="4">
      <path d="M281 920L249 923" stroke="#c4f5c4" />
      <path d="M282 919V905" stroke="#c81414" />
      <path d="M281 920L279 900" stroke="#0808a0" />
    </g>
    <path d="M245 923L257 918V926ZM272 918L282 919L276 922Z" fill="#0c6b0c" stroke="none" />
    <path d="M277 893L284 903L273 904Z" fill="#0808a0" stroke="none" />
    <g stroke="none" fontFamily="Liberation Sans" fontSize="10">
      <text x="273" y="888" fill="#1414ff">Z</text>
      <text x="278" y="890" fill="#ff7272">X</text>
      <text x="235" y="925" fill="#118011">Y</text>
    </g>
  </svg>
);

const quick: { n: IN; l: string; dark?: boolean }[] = [
  { n: "doc", l: "新建" },
  { n: "open", l: "打开" },
  { n: "save", l: "保存" },
  { n: "print", l: "打印", dark: true },
  { n: "undo", l: "撤消" },
  { n: "redo", l: "重做" },
  { n: "cursor", l: "选择" },
];

const Header = () => (
  <header className="flex h-10 shrink-0 items-center border-y border-t-[#bdbdbd] border-b-[#bdbdbd] pr-3">
    <div className="flex w-[138px] shrink-0 items-center gap-[5px] pl-[5px]">
      <svg width="21" height="22" viewBox="0 0 21 22" fill="none" stroke="#d6291e" strokeWidth="1.700" aria-hidden="true">
        <path d="M6 1.500c3-1 7-1 6 1-1 2-3 3-6 4 4-1 6 1 4 5-2 4-5 7-9 8l4-8M20 9c-3-1.500-6-1-6.500 1s4 3.500 3.500 6-4 3-7 2.500" />
      </svg>
      <span className="font-[Lato] text-[15px] text-[#d6291e] italic"><b className="font-black">SOLID</b>WORKS</span>
    </div>
    <nav className="flex shrink-0 text-[14px] text-black">
      {["文件(F)", "编辑(E)", "视图(V)", "插入(I)", "工具(T)", "窗口(W)"].map((t) => (
        <button key={t} className={"h-[29px] w-[59px] whitespace-nowrap " + (t[0] === "工" ? "bg-white" : "")}>{t}</button>
      ))}
    </nav>
    <I n="pin" s={16} c="ml-3 text-[#707070]" />
    <div className="ml-1 flex h-full shrink-0 items-center border-l border-[#c8c8c8] pl-6">
      <button aria-label="主页" className="mr-4"><I n="home" /></button>
      <div className="flex gap-[11px]">
        {quick.map((q) => (
          <button key={q.n} aria-label={q.l} className="flex items-center gap-[10px]">
            <I n={q.n} />
            <Down c={q.dark ? "text-[#333]" : "text-[#8a8a8a]"} />
          </button>
        ))}
        <button aria-label="重建"><I n="light" /></button>
      </div>
      <button aria-label="文件属性" className="ml-[15px]"><I n="list" /></button>
      <button aria-label="选项" className="ml-[15px] flex items-center gap-[10px] text-[#444]"><I n="gear" /><Down c="text-[#333]" /></button>
    </div>
    <h1 className="flex-1 text-center text-[14px] text-black">零件5</h1>
    <div className="flex h-7 w-[252px] shrink-0 items-center border border-[#b9b9b9] bg-white pl-[6px]">
      <Ic>
        <circle cx="9" cy="9" r="8" fill="#e8eef2" stroke="#333" />
        <path d="M6.500 7c0-3 5-3 5 0 0 2-2.500 2-2.500 4M9 12.500V14" stroke="#1d6f95" strokeWidth="2" />
      </Ic>
      <input aria-label="搜索" placeholder="搜索 SOLIDWORKS 帮助" className="ml-2 w-[170px] bg-transparent text-[14px] placeholder:text-[#666]" />
      <Ic c="ml-2"><circle cx="7.500" cy="7" r="5.500" stroke="#888" strokeWidth="1.500" /><path d="m11.500 11 5.500 6" stroke="#888" strokeWidth="2" /></Ic>
      <span className="ml-2"><Down c="text-[#777]" /></span>
    </div>
    <div className="ml-4 flex shrink-0 gap-[23px]">
      <button aria-label="登录"><Ic><circle cx="9" cy="9" r="8" stroke="#444" strokeWidth="1.300" /><circle cx="9" cy="7" r="3" stroke="#444" strokeWidth="1.200" /><path d="M4 15c1-6 9-6 10 0" stroke="#444" strokeWidth="1.200" /></Ic></button>
      <button aria-label="帮助"><Ic><circle cx="9" cy="9" r="8" stroke="#444" strokeWidth="1.300" /><path d="M6.500 7c0-3 5-3 5 0 0 2-2.500 2-2.500 4M9 12.500V14" stroke="#333" strokeWidth="1.700" /></Ic></button>
      <button aria-label="最小化"><Ic><path d="M4 13h10" stroke="#333" strokeWidth="2" /></Ic></button>
      <button aria-label="还原"><Ic><path d="M6.500 6V3h10v7.500H12M1.500 7h10v7.500h-10z" stroke="#444" strokeWidth="1.500" /></Ic></button>
      <button aria-label="关闭"><Ic><path d="m4 4 10 10M14 4 4 14" stroke="#444" strokeWidth="1.800" /></Ic></button>
    </div>
  </header>
);

const Big = ({ n, a, b, w, arrow }: { n: IN; a: string; b?: string; w: string; arrow?: boolean }) => (
  <button className={"flex h-full flex-col items-center whitespace-nowrap " + w}>
    <I n={n} s={20} c="mt-1 mb-px" />
    <span className="leading-[19px]">{a}</span>
    {b && <span className="leading-[19px]">{b}</span>}
    {arrow && <span className="mt-[22px]"><Down /></span>}
  </button>
);
const Small = ({ n, t }: { n?: IN; t: string }) => (
  <button className="flex h-[26px] items-center gap-[6px] whitespace-nowrap">{n && <I n={n} s={20} />}{t}</button>
);

const Ribbon = () => (
  <div className="flex h-[82px] shrink-0 border-b border-[#7d7d7d] text-[14px] text-[#b3b3b3]">
    <div className="mb-[2px] flex border-r border-[#c9c9c9] pl-[6px]">
      <Big n="boss" a="拉伸凸" b="台/基体" w="w-14" />
      <Big n="revolve" a="旋转凸" b="台/基体" w="w-14" />
      <div className="ml-1 flex w-[126px] flex-col">
        <Small n="sweep" t="扫描" />
        <Small n="loft" t="放样凸台/基体" />
        <Small n="boundary" t="边界凸台/基体" />
      </div>
    </div>
    <div className="mb-[2px] flex w-[519px] justify-between border-r border-[#c9c9c9]">
      <div className="flex">
        <Big n="cut" a="拉伸切" b="除" w="w-[54px]" />
        <Big n="hole" a="异型孔向导" w="w-[76px]" arrow />
      </div>
      <div className="flex gap-3 pr-[11px]">
        <div className="flex flex-col"><Small t="筋" /><Small t="拔模" /><Small t="抽壳" /></div>
        <div className="flex flex-col"><Small n="wrap" t="包覆" /><Small n="intersect" t="相交" /><Small n="mirror" t="镜向" /></div>
      </div>
    </div>
    <div className="mb-[2px] flex border-r border-[#c9c9c9]">
      <Big n="refgeo" a="参考..." w="w-14" arrow />
      <Big n="curve" a="曲线" w="w-[36px]" arrow />
    </div>
    <button className="mt-px mb-[2px] ml-[2px] flex w-[71px] flex-col items-center border border-[#6b6b6b] bg-[#b2b2b2] text-[13px] text-black">
      <I n="instant" s={20} c="mt-1" />
      <span className="leading-5">Instant3D</span>
    </button>
    <button aria-label="折叠功能区" className="mr-[5px] mb-2 ml-auto self-end">
      <svg width="12" height="8" viewBox="0 0 12 8" fill="none" aria-hidden="true"><path d="m2 6 4-4 4 4" stroke="#333" strokeWidth="2" /></svg>
    </button>
  </div>
);

const ctabs = [
  { t: "草图", w: "w-14" },
  { t: "曲面", w: "w-14" },
  { t: "钣金", w: "w-14" },
  { t: "焊件", w: "w-14" },
  { t: "模具工具", w: "w-[83px]" },
];

const LeftPanel = () => (
  <aside className="z-10 flex w-[231px] shrink-0 flex-col border-r border-[#7d7d7d] bg-[#f7f7f7]">
    <div className="flex h-7 w-max text-[16px] text-[#222]">
      <button className="w-[55px] bg-[#f7f7f7]">特征</button>
      {ctabs.map((c) => (
        <button key={c.t} className={"border-b border-l border-[#7d7d7d] bg-[#d4d4d4] " + c.w}>{c.t}</button>
      ))}
      <div className="w-[229px] border-b border-l border-[#7d7d7d] bg-[#d4d4d4]" />
      <button className="w-[174px] border-b border-[#7d7d7d] bg-[#d4d4d4] pr-3 text-right text-[15px]">SOLIDWORKS 插件</button>
      <button className="w-[57px] border-x border-b border-[#7d7d7d] bg-[#d4d4d4] text-[15px]">MBD</button>
    </div>
    <div className="mr-[2px] h-[5px] border-y border-t-[#9fc0bf] border-b-[#c9c9c9]" />
    <div className="mr-[2px] flex h-5 items-center justify-center border-b border-[#c9c9c9]">
      <span className="size-[6px] rounded-full border border-[#888] bg-[#bbb]" />
    </div>
    <div className="mt-1 flex h-[26px]">
      <button aria-label="特征树" className="flex w-[41px] items-center justify-center border-t border-[#7d7d7d] pl-1"><I n="part" /></button>
      {(["props", "config", "target", "ball"] as IN[]).map((n) => (
        <button key={n} aria-label={n} className="flex w-10 items-center justify-center border border-r-0 border-[#7d7d7d] bg-[#d4d4d4]"><I n={n} /></button>
      ))}
      <button aria-label="更多" className="flex flex-1 items-center justify-center border-l border-[#7d7d7d] pl-1">
        <svg width="8" height="12" viewBox="0 0 8 12" fill="none" aria-hidden="true"><path d="m2 1 4 5-4 5" stroke="#333" strokeWidth="1.800" /></svg>
      </button>
    </div>
    <div className="mx-[5px] flex h-[32px] items-center border border-[#c3c3c3] pl-[2px]"><I n="funnel" /></div>
    <ul className="overflow-hidden text-[15px] text-black">
      <li className="flex h-6 items-center gap-1 pl-[5px] whitespace-nowrap"><I n="part" />{"零件5 (默认) <<默认>_显示状"}</li>
      {tree.map((t) => (
        <li key={t.t} className="flex h-6 items-center gap-[5px] whitespace-nowrap">
          <span className="flex w-[22px] justify-center">
            {t.x && <svg width="5" height="8" viewBox="0 0 5 8" aria-hidden="true"><path d="m0 0 4 4-4 4z" fill="#666" /></svg>}
          </span>
          {t.i}
          {t.t}
        </li>
      ))}
    </ul>
    <div className="mr-[2px] h-1 shrink-0 bg-[#338bc6]" />
    <div className="mt-auto mr-[2px] mb-[2px] flex h-[23px] shrink-0 items-center border-b border-[#c9c9c9] bg-[#f0f0f0] px-[7px] pb-[3px]">
      <svg width="7" height="10" viewBox="0 0 7 10" fill="none" aria-hidden="true"><path d="M6 1 2 5l4 4" stroke="#444" strokeWidth="1.800" /></svg>
      <span className="ml-2 h-[19px] w-[156px] bg-[#cdcdcd]" />
      <svg width="7" height="10" viewBox="0 0 7 10" fill="none" className="ml-auto" aria-hidden="true"><path d="m1 1 4 4-4 4" stroke="#444" strokeWidth="1.800" /></svg>
    </div>
  </aside>
);

const ViewBar = () => (
  <div className="absolute top-[30px] left-[489px] flex items-center gap-2">
    {(["zoomfit", "zoomarea", "prev", "section", "dyn", "orient"] as IN[]).map((n) => (
      <button key={n} aria-label={n}><I n={n} /></button>
    ))}
    <Down />
    <I n="style" />
    <span className="-mr-1 -ml-1 flex"><Down /></span>
    <button aria-label="隐藏/显示" className="flex h-[26px] w-10 items-center border border-[#8b8b8b] bg-[#bdbdbd]">
      <span className="flex w-[25px] justify-center"><I n="eye" s={20} /></span>
      <span className="flex h-full flex-1 items-center justify-center border-l border-[#8b8b8b] bg-[#f3f3f3]"><Down c="text-[#444]" /></span>
    </button>
    <I n="appear" s={20} c="-ml-1" />
    <I n="scene" s={20} c="-ml-1" />
    <span className="-ml-1 flex"><Down /></span>
    <I n="monitor" />
    <Down />
  </div>
);

const WinCtl = () => (
  <div className="absolute top-[6px] right-[10px] flex gap-2">
    {[
      "M3.500 3v12h12V3zM10 6v6L6 9z",
      "M3.500 3v12h12V3zM9 6v6l4-3z",
      "M4 14.500h10",
      "M6.500 6V3h10v7.500H12M1.500 7h10v7.500h-10z",
      "m4 4 10 10M14 4 4 14",
    ].map((d) => (
      <Ic key={d}><path d={d} stroke="#999" strokeWidth="1.400" /></Ic>
    ))}
  </div>
);

const Viewport = () => (
  <main className="relative min-w-0 flex-1 overflow-hidden bg-white bg-[radial-gradient(ellipse_520px_420px_at_80%_36%,#d3d9e6,#e2e6ef_50%,transparent),radial-gradient(ellipse_900px_190px_at_0%_53%,#dfe3ee,transparent),linear-gradient(to_bottom_right,transparent_80%,#f1f3f8)]">
    <Model />
    <ViewBar />
    <WinCtl />
    <div className="absolute top-[408px] left-0 flex h-[49px] w-[11px] items-center justify-center border border-l-0 border-[#7d7d7d] bg-[#f7f7f7]">
      <span className="size-[6px] rounded-full border border-[#888] bg-[#ccc]" />
    </div>
    <div className="absolute top-[57px] right-0 w-[33px] border border-r-0 border-[#7d7d7d] bg-[#f7f7f7]">
      <div className="flex h-7 items-center justify-center"><I n="homeBlue" /></div>
      <div className="flex h-7 justify-center border-t border-[#7d7d7d] bg-[#d4d4d4] pt-[5px]"><I n="gear" c="text-[#333]" /></div>
    </div>
  </main>
);

const navs = ["M4 2v10M11 2v10L5 7z", "M10 2v10L4 7z", "M4 2v10l6-5z", "M10 2v10M3 2v10l6-5z"];
const BottomTabs = () => (
  <div className="flex h-5 shrink-0 border-t border-[#7d7d7d] pl-[2px] text-[16px] leading-[19px] text-black">
    {navs.map((d) => (
      <button key={d} aria-label="翻页" className="flex w-5 items-center justify-center border border-[#8b8ba8] bg-[#a9a9c2]">
        <svg width="14" height="14" viewBox="0 0 14 14" aria-hidden="true"><path d={d} fill="#8484a3" stroke="#8484a3" /></svg>
      </button>
    ))}
    <button className="w-[61px] pl-1">模型</button>
    <button className="w-[77px] border-l border-[#7d7d7d] bg-[#d4d4d4]">3D 视图</button>
    <button className="w-[109px] border-x border-[#7d7d7d] bg-[#d4d4d4] pr-3 whitespace-nowrap">运动算例 1</button>
  </div>
);

const Chev = () => (
  <svg width="10" height="7" viewBox="0 0 10 7" fill="none" aria-hidden="true"><path d="m1 6 4-4 4 4" stroke="#666" strokeWidth="1.700" /></svg>
);
const Sec = ({ h, t, c = "" }: { h: string; t?: string; c?: string }) => (
  <section className={"mr-[27px] border-t border-[#7d7d7d] " + h}>
    <div className="flex justify-end pt-2 pr-[9px]"><Chev /></div>
    {t && <p className={"text-right " + c}>{t}</p>}
  </section>
);

const RightPanel = () => (
  <aside className="flex w-[353px] shrink-0 flex-col border-l border-[#7d7d7d] bg-[#f7f7f7]">
    <div className="flex h-[23px] items-center border-b border-black bg-[#a9abaf] pr-[3px] pl-[10px]">
      <svg width="12" height="10" viewBox="0 0 12 10" fill="none" aria-hidden="true"><path d="M6 1 2 5l4 4M11 1 7 5l4 4" stroke="#222" strokeWidth="1.500" /></svg>
      <h2 className="flex-1 pr-1 text-center text-[15px] leading-5 font-bold text-black">SOLIDWORKS 资源</h2>
      <I n="gear" s={16} c="mr-1 text-[#333]" />
      <I n="pin" s={14} c="text-[#222]" />
    </div>
    <a href="#welcome" className="mt-[38px] flex items-center gap-[5px] pl-[18px] text-[13px] text-[#444]">
      <I n="homeBlue" />
      <span>欢迎使用</span>
      <span className="ml-[2px]">SOLIDWORKS</span>
    </a>
    <div className="mt-[33px]">
      <Sec h="h-[246px]" t="向导" c="mr-[146px] mt-[143px] text-[13px] text-[#444]" />
      <Sec h="h-[118px]" t="Marketplace" c="mr-[118px] mt-4 text-[13px] text-[#555570]" />
      <Sec h="h-[40px]" />
    </div>
  </aside>
);

const Field = ({ l }: { l: string }) => (
  <input aria-label={l} defaultValue="0" className="h-[30px] w-[59px] border border-[#7a7a7a] bg-white px-[3px] pb-[5px] text-[13px]" />
);
const Btn = ({ t, a, main }: { t: string; a: string; main?: boolean }) => (
  <button className={"h-[27px] w-[92px] bg-[#e1e1e1] " + (main ? "border-2 border-[#0078d7]" : "border border-[#adadad]")}>
    {t}<span className="text-[12px]">{a}</span>
  </button>
);
const sb = "absolute h-[10px] w-[10px]";
const Dialog = () => (
  <div role="dialog" aria-label="检查实体" className="absolute top-[216px] left-[1077px] z-30 flex w-[642px] flex-col border border-[#a0a0a0] bg-[#f0f0f0] text-[16px] leading-5 text-black shadow-[2px_4px_14px_rgba(0,0,0,0.4)]">
    <div className="flex h-[37px] items-center justify-between bg-white pr-[15px] pl-[9px] text-[15px] text-[#999]">
      检查实体
      <button aria-label="关闭窗口"><Ic s={13}><path d="m1 1 16 16M17 1 1 17" stroke="#8a8a8a" strokeWidth="1.500" /></Ic></button>
    </div>
    <div className="mt-1 ml-[5px] flex"><button className="relative -mb-px h-[26px] w-20 border border-b-0 border-[#dcdcdc] bg-white pb-[3px]">检查实体</button></div>
    <div className="mr-3 ml-[5px] border border-[#dcdcdc] bg-white pr-[10px] pb-[13px] pl-[6px]">
      <fieldset className="relative mt-4 ml-[2px] grid h-[136px] w-[295px] grid-cols-[132px_1fr] content-start border border-[#dcdcdc] pt-[17px] pl-[6px]">
        <legend className="absolute -top-[11px] left-[6px] bg-white px-[2px]">检查</legend>
        <Tick t="严格实体/曲面检查" a="(R)" c="col-span-2" />
        <div className="mt-3 flex flex-col">
          <Radio t="所有" a="(A)" on />
          <Tick t="实体" on c="mt-1 ml-[27px]" />
          <Tick t="曲面" on c="mt-[5px] ml-[27px]" />
        </div>
        <div className="mt-3 flex flex-col gap-[6px]">
          <Radio t="所选项" a="(I)" />
          <Radio t="特征" a="(F)" />
        </div>
      </fieldset>
      <fieldset className="relative mt-5 flex h-[180px] border border-[#dcdcdc]">
        <legend className="absolute -top-[11px] left-[6px] bg-white px-[2px]">查找</legend>
        <div className="flex w-[199px] flex-col gap-[14px] pt-[36px] pl-[21px]">
          <Tick t="无效的面" a="(A)" on />
          <Tick t="无效的边线" a="(E)" on />
          <Tick t="短的边线" a="(S)" />
        </div>
        <div className="flex w-[101px] flex-col gap-[5px] pt-[7px]">
          <span className="mb-[1px] pl-[11px]">找到</span>
          <Field l="无效的面" />
          <Field l="无效的边线" />
          <Field l="短的边线" />
        </div>
        <div className="flex flex-col gap-[14px] pt-[42px]">
          <Tick t="打开曲面" on />
          <Tick t="最小曲率半径" a="(M)" />
          <Tick t="最大边线间隙" a="(G)" />
          <Tick t="最大顶点间隙" />
        </div>
      </fieldset>
      <label htmlFor="results" className="mt-[10px] block">结果清单</label>
      <input id="results" className="mt-[6px] block h-[31px] w-full border border-[#7a7f85] bg-white" />
      <div className="relative mt-5 h-[105px] border border-[#7a7a7a] pt-px pl-px">
        <div className="absolute top-px right-px bottom-px w-5 bg-[#f0f0f0]" />
        <div className="absolute right-px bottom-px left-px h-5 bg-[#f0f0f0]" />
        <svg className={sb + " top-[7px] right-[6px]"} viewBox="0 0 10 10" fill="none" aria-hidden="true"><path d="m1 7 4-5 4 5" stroke="#bbb" strokeWidth="1.600" /></svg>
        <svg className={sb + " right-[6px] bottom-[27px]"} viewBox="0 0 10 10" fill="none" aria-hidden="true"><path d="m1 3 4 5 4-5" stroke="#bbb" strokeWidth="1.600" /></svg>
        <svg className={sb + " bottom-[6px] left-[6px]"} viewBox="0 0 10 10" fill="none" aria-hidden="true"><path d="M7 1 3 5l4 4" stroke="#bbb" strokeWidth="1.600" /></svg>
        <svg className={sb + " right-[28px] bottom-[6px]"} viewBox="0 0 10 10" fill="none" aria-hidden="true"><path d="m3 1 4 4-4 4" stroke="#bbb" strokeWidth="1.600" /></svg>
      </div>
    </div>
    <div className="flex justify-end gap-[11px] pt-[28px] pr-[23px] pb-[5px]">
      <Btn t="检查" a="(K)" main />
      <Btn t="关闭" a="(C)" />
      <Btn t="帮助" a="(H)" />
    </div>
  </div>
);

const Ime = () => (
  <div className="absolute top-[860px] left-[1693px] z-40 flex h-8 w-[221px] items-center rounded-[2px] border border-[#b9cfe6] bg-white pl-[45px] text-[#0b6fd6]">
    <svg width="42" height="42" viewBox="0 0 42 42" className="absolute -top-[8px] -left-[2px]" fill="none" aria-hidden="true">
      <path d="M4 7 31 1c3 0 4 1 4 4l5 27c0 3-1 4-4 5L11 41c-3 0-4-1-4-4L2 12c0-3 0-4 2-5z" fill="#f2571f" />
      <path d="M30 11c-6-2-18-1-18 5 0 7 19 3 19 10 0 6-12 7-20 4" stroke="#fff" strokeWidth="5.500" />
    </svg>
    <span className="w-[18px] text-[17px] leading-5 font-bold">中</span>
    <Ic c="ml-[13px]"><circle cx="5" cy="6" r="2" stroke="currentColor" strokeWidth="1.500" /><path d="M13 8.500c3-1 4 4-1 7 1-2 1-3 0-4-1-2 0-3 1-3z" fill="currentColor" /></Ic>
    <Ic c="ml-3"><rect x="6" y="0" width="6" height="11" rx="3" fill="currentColor" /><path d="M2.500 7.500c0 8 13 8 13 0M9 14v4" stroke="currentColor" strokeWidth="1.600" /></Ic>
    <Ic c="ml-3"><rect x="1" y="2" width="16" height="14" rx="1.500" stroke="currentColor" strokeWidth="1.800" /><path d="M3 6h12M3 9.500h12M5 13h8M6 4v7M9 4v7M12 4v7" stroke="currentColor" strokeWidth="1.200" /></Ic>
    <Ic c="ml-3 overflow-visible">
      <defs><linearGradient id="shirt" x1="0" y1="0" x2="1" y2="1"><stop offset="0" stopColor="#f5543c" /><stop offset=".5" stopColor="#a05cf0" /><stop offset="1" stopColor="#36c0f5" /></linearGradient></defs>
      <path d="M5 1c2 2 6 2 8 0l5 4-2.500 4L14 8v9H4V8L2.500 9 0 5z" fill="url(#shirt)" />
      <circle cx="17" cy="-2" r="3.500" fill="#f5502a" />
    </Ic>
    <Ic c="ml-3"><path d="M2 2h6v6H2zM2 10h6v6H2zM10 10h6v6h-6z" fill="currentColor" stroke="currentColor" strokeLinejoin="round" /><path d="M11 2.500h4.500v5H11z" stroke="currentColor" strokeWidth="1.800" /></Ic>
  </div>
);

const red = "pointer-events-none absolute rounded-[4px] border-4 border-[#ff2010]";

export default function App() {
  return (
    <div className="relative flex h-screen flex-col overflow-hidden bg-[#f7f7f7] font-['Open_Sans','Noto_Sans_CJK_SC',sans-serif]">
      <div className="absolute top-0 left-[809px] z-10 h-px w-[60px] bg-[#0078d7]" />
      <Header />
      <Ribbon />
      <div className="flex min-h-0 flex-1">
        <div className="flex min-w-0 flex-1 flex-col">
          <div className="flex min-h-0 flex-1">
            <LeftPanel />
            <Viewport />
          </div>
          <BottomTabs />
        </div>
        <RightPanel />
      </div>
      <footer className="flex h-5 shrink-0 items-center border-t border-[#7d7d7d] text-[15px] leading-[19px] text-black">
        <span className="ml-auto w-[202px]">在编辑 零件</span>
        <span className="w-[66px] text-[#a5a5a5]">自定义</span>
        <span className="w-[33px]"><svg width="8" height="5" viewBox="0 0 8 5" aria-hidden="true"><path d="M1 5h6L4 1z" fill="#888" /></svg></span>
        <Ic s={17}><path d="m1 4 7-3 9 8v5l-6 3-10-8z" fill="#ddd" stroke="#444" strokeWidth="1.400" /><circle cx="6" cy="6" r="2" stroke="#444" /></Ic>
      </footer>

      <div className="absolute top-[42px] left-[373px] z-20 w-[300px] border border-[#a0a0a0] bg-[#f7f7f7] shadow-[2px_3px_3px_rgba(0,0,0,0.5)]">
        <Menu items={menu} />
      </div>
      <div className="absolute top-[750px] left-[667px] z-20 h-[290px] w-[286px] border border-[#a0a0a0] bg-[#f7f7f7] shadow-[2px_3px_3px_rgba(0,0,0,0.5)]">
        <Menu items={evalMenu} help />
      </div>
      <Dialog />
      <Ime />
      <div className={red + " top-1 left-[372px] z-20 h-[33px] w-[72px]"} />
      <div className={red + " top-[753px] left-[381px] z-20 h-[30px] w-[114px]"} />
      <div className={red + " top-[873px] left-[667px] z-20 h-[33px] w-[109px]"} />
      <div className={red + " top-[924px] left-[663px] z-20 h-8 w-[139px]"} />
    </div>
  );
}
